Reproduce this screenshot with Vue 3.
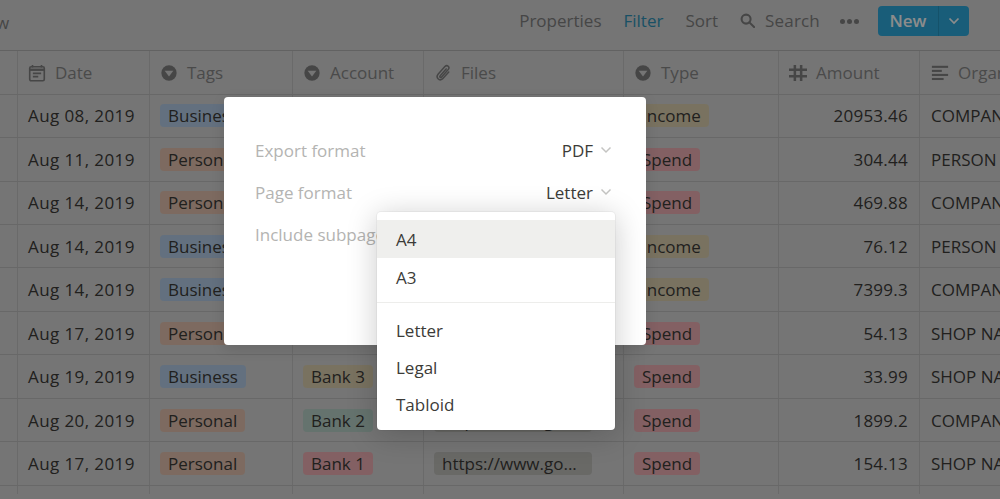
<script setup>
const columns = [
  { key: 'date', label: 'Date', icon: 'calendar' },
  { key: 'tags', label: 'Tags', icon: 'select' },
  { key: 'account', label: 'Account', icon: 'select' },
  { key: 'files', label: 'Files', icon: 'clip' },
  { key: 'type', label: 'Type', icon: 'select' },
  { key: 'amount', label: 'Amount', icon: 'hash' },
  { key: 'org', label: 'Organization', icon: 'lines' },
]

const rows = [
  ['Aug 08, 2019', 'Business', 'Bank 1', 'Income', '20953.46', 'COMPANY NAME'],
  ['Aug 11, 2019', 'Personal', 'Bank 1', 'Spend', '304.44', 'PERSON NAME'],
  ['Aug 14, 2019', 'Personal', 'Bank 2', 'Spend', '469.88', 'COMPANY NAME'],
  ['Aug 14, 2019', 'Business', 'Bank 3', 'Income', '76.12', 'PERSON NAME'],
  ['Aug 14, 2019', 'Business', 'Bank 3', 'Income', '7399.3', 'COMPANY NAME'],
  ['Aug 17, 2019', 'Personal', 'Bank 1', 'Spend', '54.13', 'SHOP NAME'],
  ['Aug 19, 2019', 'Business', 'Bank 3', 'Spend', '33.99', 'SHOP NAME'],
  ['Aug 20, 2019', 'Personal', 'Bank 2', 'Spend', '1899.2', 'COMPANY NAME'],
  ['Aug 17, 2019', 'Personal', 'Bank 1', 'Spend', '154.13', 'SHOP NAME'],
].map(([date, tag, account, type, amount, org]) => ({ date, tag, account, type, amount, org }))

const tagClass = {
  Business: 'blue',
  Personal: 'orange',
  'Bank 1': 'red',
  'Bank 2': 'green',
  'Bank 3': 'yellow',
  Income: 'yellow',
  Spend: 'red',
}
</script>

<template>
  <div class="page">
    <header class="toolbar">
      <span class="view-name">View</span>
      <div class="actions">
        <span class="action">Properties</span>
        <span class="action filter">Filter</span>
        <span class="action">Sort</span>
        <span class="action search">
          <svg width="15" height="15" viewBox="0 0 16 16" fill="none" stroke="currentColor" stroke-width="2.2">
            <circle cx="6.5" cy="6.5" r="4.8" />
            <path d="M10 10l5 5" stroke-linecap="round" />
          </svg>
          Search
        </span>
        <span class="dots"><i></i><i></i><i></i></span>
        <div class="new-btn">
          <span class="new-label">New</span>
          <span class="new-arrow">
            <svg width="12" height="8" viewBox="0 0 12 8" fill="none" stroke="currentColor" stroke-width="1.7">
              <path d="M1.5 1.5L6 6l4.5-4.5" />
            </svg>
          </span>
        </div>
      </div>
    </header>

    <div class="table">
      <div class="row head">
        <div v-for="col in columns" :key="col.key" class="cell" :class="col.key">
          <svg v-if="col.icon === 'calendar'" class="col-icon" viewBox="0 0 20 20" fill="none" stroke="currentColor" stroke-width="1.8">
            <rect x="1.900" y="3" width="16.200" height="15.600" rx="1.600" />
            <path d="M2 6.400h16" stroke-width="2.600" />
            <path d="M5 1v3M15 1v3M5.400 10.400h9.200M5.400 14h6" />
          </svg>
          <svg v-else-if="col.icon === 'select'" class="col-icon" viewBox="0 0 20 20">
            <circle cx="10" cy="10" r="8.500" fill="currentColor" />
            <path d="M5.200 7.400h9.600L10 13.800z" fill="#d5d5d5" />
          </svg>
          <svg v-else-if="col.icon === 'clip'" class="col-icon" viewBox="0 0 20 20" fill="none" stroke="currentColor" stroke-width="1.700" stroke-linecap="round">
            <path d="M13.500 5.500l-6.600 7.600c-1 1.100.1 2.600 1.400 1.500l7.500-8.400c2.200-2.600-1-6-3.700-3.400L4.500 11.300c-2.900 3.600 1.300 8.200 4.900 5.300l7-7.600" />
          </svg>
          <svg v-else-if="col.icon === 'hash'" class="col-icon" viewBox="0 0 20 20" fill="none" stroke="currentColor" stroke-width="2.800">
            <path d="M6.500 1v18M13.500 1v18M0 6.500h20M0 13.500h20" />
          </svg>
          <svg v-else class="col-icon" viewBox="0 0 20 20" fill="currentColor">
            <rect x="1" y="2" width="18" height="2.300" />
            <rect x="1" y="6.500" width="11" height="2.300" />
            <rect x="1" y="11" width="18" height="2.300" />
            <rect x="1" y="15.500" width="13" height="2.300" />
          </svg>
          <span>{{ col.label }}</span>
        </div>
      </div>

      <div v-for="(row, i) in rows" :key="i" class="row">
        <div class="cell date">{{ row.date }}</div>
        <div class="cell tags"><span class="tag" :class="tagClass[row.tag]">{{ row.tag }}</span></div>
        <div class="cell account"><span class="tag" :class="tagClass[row.account]">{{ row.account }}</span></div>
        <div class="cell files"><span class="tag file">https://www.go...</span></div>
        <div class="cell type"><span class="tag" :class="tagClass[row.type]">{{ row.type }}</span></div>
        <div class="cell amount">{{ row.amount }}</div>
        <div class="cell org">{{ row.org }}</div>
      </div>

      <div class="row foot">
        <div v-for="col in columns" :key="col.key" class="cell" :class="col.key"></div>
      </div>
    </div>

    <div class="overlay"></div>

    <div class="modal">
      <div class="option">
        <span class="option-label">Export format</span>
        <span class="option-value">
          PDF
          <svg width="12" height="8" viewBox="0 0 12 8" fill="none" stroke="currentColor" stroke-width="1.500">
            <path d="M1.500 1.500L6 6l4.500-4.500" />
          </svg>
        </span>
      </div>
      <div class="option">
        <span class="option-label">Page format</span>
        <span class="option-value">
          Letter
          <svg width="12" height="8" viewBox="0 0 12 8" fill="none" stroke="currentColor" stroke-width="1.500">
            <path d="M1.500 1.500L6 6l4.500-4.500" />
          </svg>
        </span>
      </div>
      <div class="option">
        <span class="option-label">Include subpages</span>
      </div>

      <div class="menu">
        <div class="menu-item active">A4</div>
        <div class="menu-item">A3</div>
        <div class="menu-sep"></div>
        <div class="menu-item">Letter</div>
        <div class="menu-item">Legal</div>
        <div class="menu-item">Tabloid</div>
      </div>
    </div>
  </div>
</template>

<style scoped>
.page {
  position: relative;
  width: 1000px;
  height: 499px;
  overflow: hidden;
  background: #d5d5d5;
  color: #3c3b38;
  font-family: "Open Sans", "Noto Sans", sans-serif;
  font-size: 17px;
}

.toolbar {
  display: flex;
  justify-content: space-between;
  align-items: center;
  height: 44px;
  padding: 0 31px 0 0;
  margin-bottom: 6.300px;
  color: #808080;
}
.view-name {
  margin-left: -28px;
}
.actions {
  display: flex;
  align-items: center;
}
.action {
  margin: 0 22px 4px 0;
}
.filter {
  color: #2f93b8;
}
.search {
  display: flex;
  align-items: center;
  gap: 10px;
  margin-right: 20px;
  letter-spacing: 0.2px;
}
.dots {
  display: flex;
  gap: 2px;
  margin: 0 19px 2px 0;
}
.dots i {
  width: 5px;
  height: 5px;
  border-radius: 50%;
  background: #808080;
}
.new-btn {
  display: flex;
  width: 91px;
  height: 30px;
  margin-top: -3px;
  border-radius: 4px;
  background: #2eaadc;
  color: #fff;
  font-weight: 600;
}
.new-label {
  width: 60px;
  text-align: center;
  line-height: 30px;
  border-right: 1px solid #2795c2;
}
.new-arrow {
  flex: 1;
  display: flex;
  align-items: center;
  justify-content: center;
}

.table {
  border-top: 1px solid #b2b2b2;
}
.row {
  display: flex;
  height: 43.440px;
  box-sizing: border-box;
  border-bottom: 1px solid #bdbdbd;
  padding-left: 17px;
}
.row.head .cell span {
  margin-top: -1px;
}
.row.foot {
  height: 8px;
  border-bottom: none;
}
.cell {
  display: flex;
  align-items: center;
  flex: none;
  box-sizing: border-box;
  padding: 0 11px 0 10px;
  border-left: 1px solid #c2c2c2;
  white-space: nowrap;
  overflow: hidden;
}
.head .cell {
  gap: 9px;
  color: #888;
}
.col-icon {
  flex: none;
  width: 18px;
  height: 18px;
  color: #808080;
}
.date { width: 132px; letter-spacing: 0.4px; }
.tags { width: 143px; }
.account { width: 131px; }
.files { width: 200px; }
.type { width: 155px; }
.amount { width: 141px; justify-content: flex-end; letter-spacing: 0.25px; }
.head .date, .head .amount { letter-spacing: 0; }
.head .amount { justify-content: flex-start; }
.org { width: 120px; padding-left: 11px; }

.tag {
  display: inline-block;
  height: 23px;
  line-height: 23px;
  padding: 0 8px;
  border-radius: 4px;
}
.blue { background: #b4cde8; }
.orange { background: #e3c2b0; }
.red { background: #eeb0b5; }
.green { background: #b8d2c8; }
.yellow { background: #dcd0b0; }
.file { background: #bfbfbb; width: 158px; box-sizing: border-box; }

.overlay {
  position: absolute;
  inset: 0;
  background: rgba(0, 0, 0, 0.45);
}

.modal {
  position: absolute;
  left: 224px;
  top: 97px;
  width: 422px;
  height: 248px;
  box-sizing: border-box;
  padding: 32px 34px 0 31px;
  border-radius: 4px;
  background: #fff;
  box-shadow: 0 4px 14px rgba(0, 0, 0, 0.12);
}
.option {
  display: flex;
  justify-content: space-between;
  align-items: center;
  height: 42px;
}
.option-label {
  color: #b4b4b2;
}
.option-value {
  display: flex;
  align-items: center;
  gap: 7px;
}
.option-value svg {
  color: #c4c4c2;
}

.menu {
  position: absolute;
  left: 153px;
  top: 115px;
  width: 238px;
  padding: 8px 0 8px;
  border-radius: 4px;
  background: #fff;
  box-shadow: 0 0 0 1px rgba(15, 15, 15, 0.04), 0 4px 30px rgba(15, 15, 15, 0.22);
}
.menu-item {
  height: 37px;
  box-sizing: border-box;
  line-height: 37px;
  padding: 1px 0 0 19px;
}
.menu-item.active {
  height: 38px;
  background: #efefed;
}
.menu-sep {
  height: 1px;
  margin: 7px 0 8px;
  background: #ededeb;
}
</style>
